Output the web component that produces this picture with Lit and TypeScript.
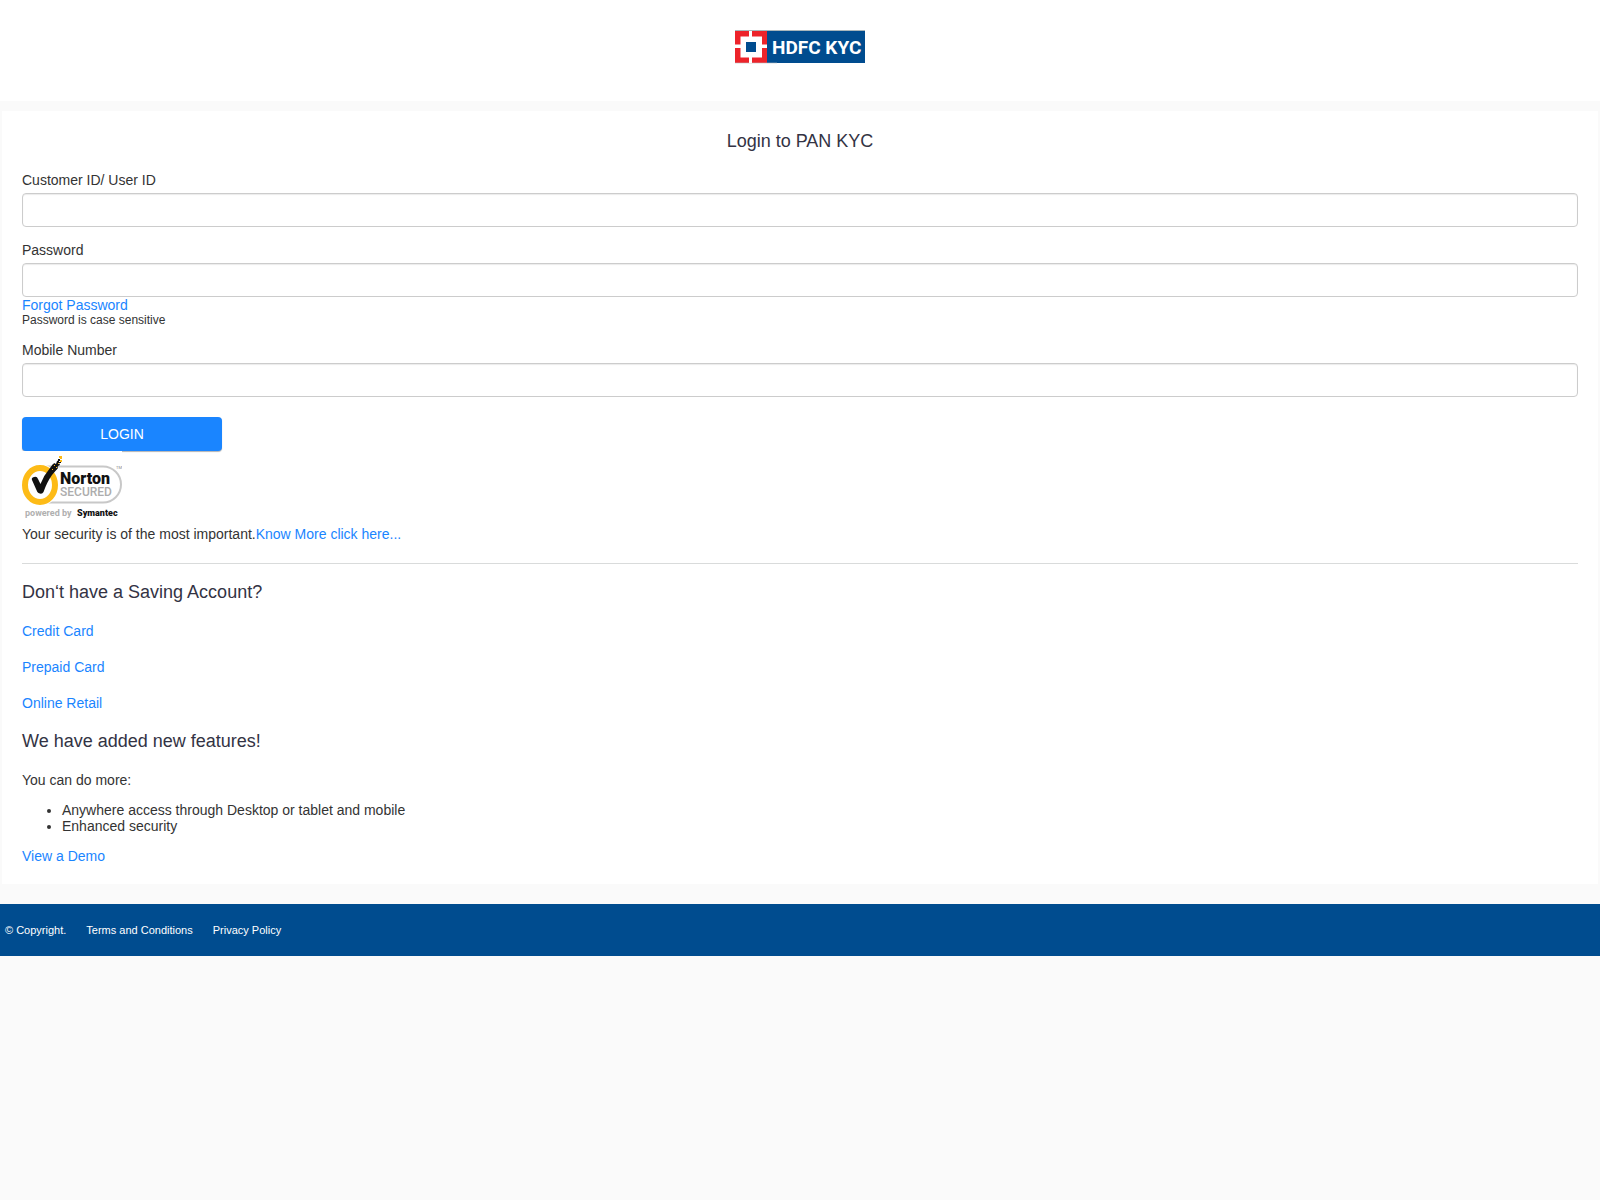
import { LitElement, html, css } from "lit";
import { customElement } from "lit/decorators.js";

@customElement("brand-logo")
class BrandLogo extends LitElement {
  static styles = css`
    :host { display: block; }
    .logo { display: block; width: 130px; height: 34px; }
    .word { font: 700 19px Roboto, "Liberation Sans", sans-serif; fill: #fff; }
  `;
  render() {
    return html`
      <svg class="logo" viewBox="0 0 130 34" role="img" aria-label="HDFC KYC">
        <rect width="130" height="33" fill="#004c8f" />
        <rect width="32" height="33" fill="#ed232a" />
        <path d="M0 0.5H130" stroke="#a9b6bb" />
        <path d="M0 33H42" stroke="#b9bfc4" stroke-width="0.6" />
        <path d="M14 1H17V6.500H27V14.500H32V18H27V27.500H17V33H14V27.500H5.500V18H0V14.500H5.500V6.500H14Z" fill="#fff" />
        <rect x="11" y="12" width="10" height="10" fill="#004c8f" />
        <text class="word" x="37" y="24">HDFC KYC</text>
      </svg>
    `;
  }
}

@customElement("norton-seal")
class NortonSeal extends LitElement {
  static styles = css`
    :host { display: block; }
    .seal { display: block; width: 100px; height: 75px; background: #fff; }
    .name { font: 900 16px Roboto, sans-serif; fill: #111; }
    .secured { font: 500 12px Roboto, sans-serif; fill: #adadad; }
    .by { font: 700 9px Roboto, sans-serif; fill: #b0b0b0; }
    .maker { font: 900 9px Roboto, sans-serif; fill: #111; }
    .mark { font: 400 4px Roboto, sans-serif; fill: #888; }
  `;
  render() {
    return html`
      <svg class="seal" viewBox="0 0 100 75" role="img" aria-label="Norton Secured, powered by Symantec">
        <path d="M20 15.5H81A18 18 0 0 1 81 51.5H20" fill="#fff" stroke="#c8c8c8" stroke-width="2" />
        <ellipse cx="18" cy="34" rx="18" ry="20" fill="#fff" stroke="#fff" stroke-width="2" />
        <ellipse cx="18" cy="34" rx="15" ry="17" fill="#fff" stroke="#fdbb17" stroke-width="6" />
        <path d="M10 29Q9 27 12 26Q15 25 16 28L18.500 33Q22 24 28 17L31 13L36 17L30 24Q25 31 21.500 41Q20 44 16.500 42Q15 41 14 38Z" fill="#111" />
        <path d="M29 17L32 12L34 13L35 10L37 9V12L38 14L36 15L35 18L32 20ZM36 8H38V10H36ZM37 11H39V12H37ZM27 20L30 15L31 20Z" fill="#111" />
        <path d="M38 9H40V11H38ZM37 5H40V8H38V7H37ZM32 14H33V15H32ZM34 16H35V17H34ZM36 12H37V13H36ZM30 18H31V19H30Z" fill="#fdbb17" />
        <text class="name" x="38" y="33">Norton</text>
        <text class="secured" x="38" y="45">SECURED</text>
        <text class="by" x="3" y="65">powered by</text>
        <text class="maker" x="55" y="65">Symantec</text>
        <text class="mark" x="94" y="18">TM</text>
      </svg>
    `;
  }
}

@customElement("app-root")
class AppRoot extends LitElement {
  static styles = css`
    :host {
      display: block;
      min-height: 100vh;
      background: #fafafa;
      color: #333;
      font: 14px/16px "Liberation Sans", Arial, sans-serif;
    }
    * { box-sizing: border-box; }
    a { color: #1a85ff; text-decoration: none; }
    .header {
      display: flex;
      justify-content: center;
      padding: 30px 0 37px;
      background: #fff;
    }
    .card { margin: 10px 2px 20px; padding: 20px; background: #fff; }
    .heading {
      margin: 0 0 20px;
      color: #333344;
      font-size: 18px;
      font-weight: 400;
      line-height: 21px;
    }
    .centered { text-align: center; }
    .group { margin-bottom: 15px; }
    .label { display: block; margin-bottom: 5px; }
    .field {
      display: block;
      width: 100%;
      height: 34px;
      padding: 6px 12px;
      border: 1px solid #ccc;
      border-radius: 4px;
      background: #fff;
      box-shadow: inset 0 1px 1px rgba(0, 0, 0, 0.08);
      font: inherit;
    }
    .below { display: block; }
    .hint { display: block; font-size: 12px; line-height: 14px; }
    .login {
      display: block;
      width: 200px;
      height: 34px;
      margin-top: 20px;
      padding: 0;
      border: 0;
      border-radius: 4px;
      background: #1a85ff;
      box-shadow: 0 1px 1px rgba(0, 0, 0, 0.3);
      color: #fff;
      font: inherit;
    }
    .seal { position: relative; width: 100px; }
    .text { margin: 0; }
    .rule { margin: 21px 0 18px; border: 0; border-top: 1px solid #d9dbdb; }
    .links { display: flex; flex-direction: column; align-items: flex-start; gap: 20px; margin-bottom: 20px; }
    .list { margin: 14px 0; padding-left: 40px; }
    .footer {
      display: flex;
      gap: 20px;
      padding: 18px 5px;
      background: #004c8f;
      color: #fff;
      font-size: 11px;
    }
    .footer a { color: #fff; }
  `;
  render() {
    return html`
      <header class="header"><brand-logo></brand-logo></header>
      <main class="card">
        <h1 class="heading centered">Login to PAN KYC</h1>
        <form @submit=${(e: Event) => e.preventDefault()}>
          <div class="group">
            <label class="label" for="user">Customer ID/ User ID</label>
            <input class="field" id="user" type="text" />
          </div>
          <div class="group">
            <label class="label" for="password">Password</label>
            <input class="field" id="password" type="password" />
            <a class="below" href="#forgot">Forgot Password</a>
            <span class="hint">Password is case sensitive</span>
          </div>
          <div>
            <label class="label" for="mobile">Mobile Number</label>
            <input class="field" id="mobile" type="tel" />
          </div>
          <button class="login" type="submit">LOGIN</button>
        </form>
        <norton-seal class="seal"></norton-seal>
        <p class="text">Your security is of the most important.<a href="#security">Know More click here...</a></p>
        <hr class="rule" />
        <h2 class="heading">Don‘t have a Saving Account?</h2>
        <nav class="links">
          <a href="#credit">Credit Card</a>
          <a href="#prepaid">Prepaid Card</a>
          <a href="#retail">Online Retail</a>
        </nav>
        <h2 class="heading">We have added new features!</h2>
        <p class="text">You can do more:</p>
        <ul class="list">
          <li>Anywhere access through Desktop or tablet and mobile</li>
          <li>Enhanced security</li>
        </ul>
        <p class="text"><a href="#demo">View a Demo</a></p>
      </main>
      <footer class="footer">
        <span>© Copyright.</span>
        <a href="#terms">Terms and Conditions</a>
        <a href="#privacy">Privacy Policy</a>
      </footer>
    `;
  }
}
